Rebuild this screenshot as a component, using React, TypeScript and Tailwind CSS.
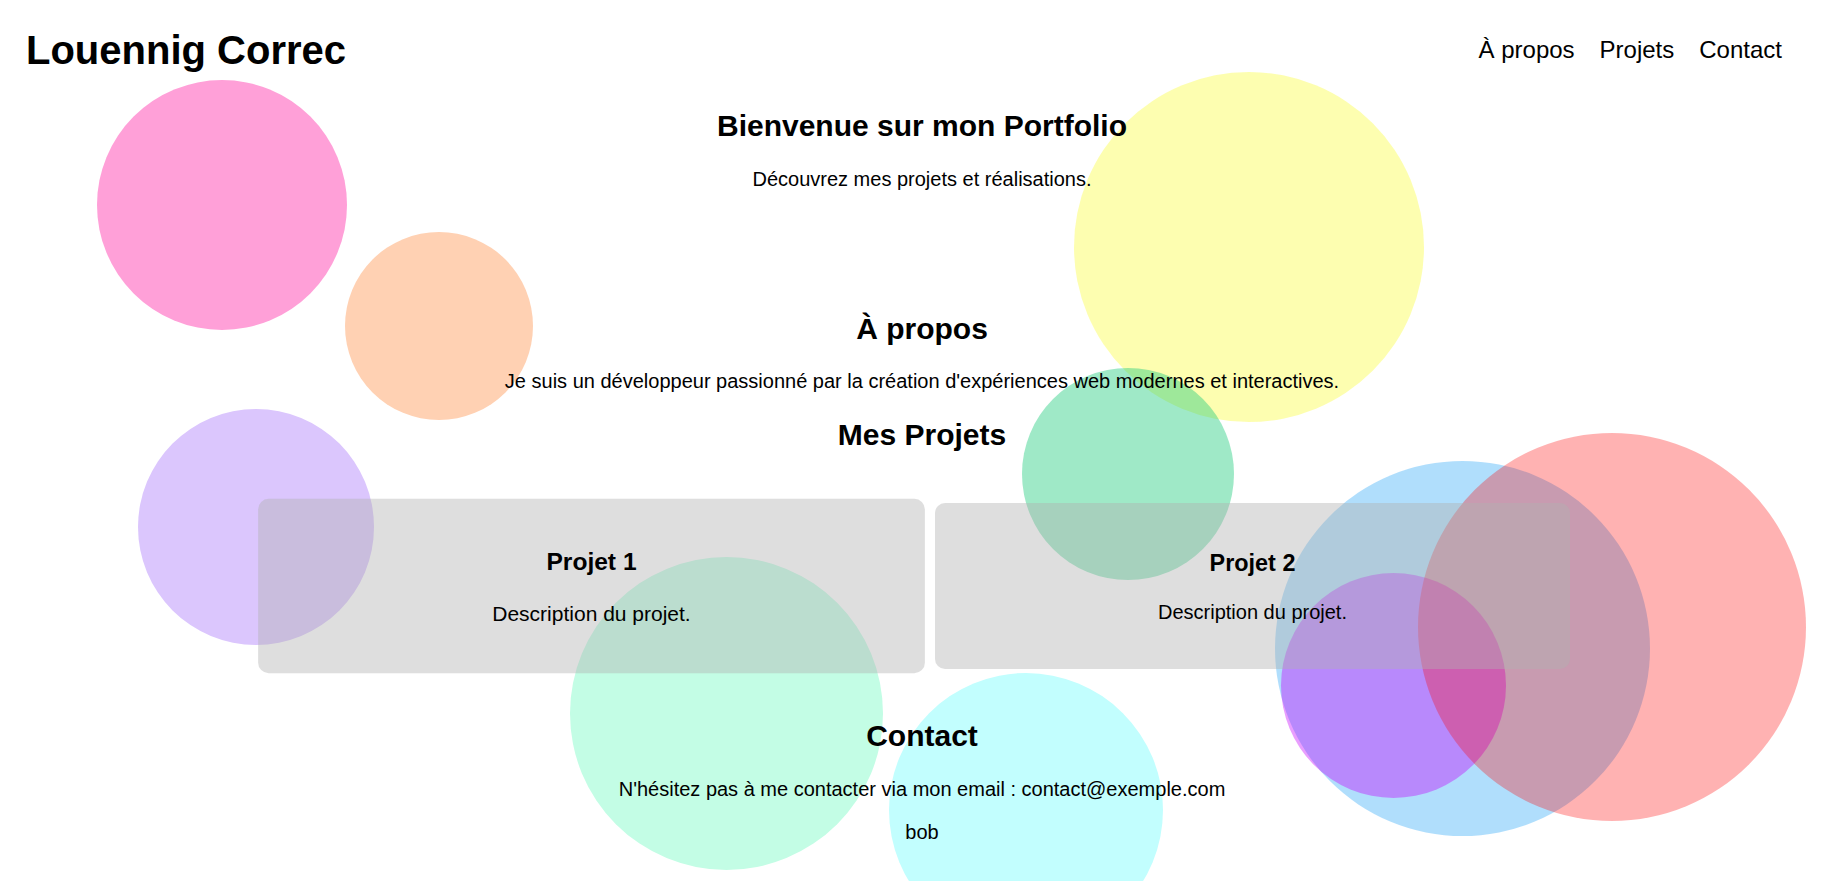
import React from "react";

type Circle = { left: number; top: number; d: number; color: string };

const circles: Circle[] = [
  { left: 96.5, top: 80.3, d: 250, color: "rgb(255,160,216)" },
  { left: 344.8, top: 231.5, d: 188, color: "rgb(255,209,179)" },
  { left: 1074, top: 72, d: 350, color: "rgba(248,252,0,0.31)" },
  { left: 1021.6, top: 367.5, d: 212, color: "rgba(32,204,125,0.43)" },
  { left: 138, top: 409, d: 236, color: "rgb(219,198,253)" },
  { left: 569.5, top: 556.5, d: 313, color: "rgb(195,253,229)" },
  { left: 889, top: 673, d: 274, color: "rgb(194,254,254)" },
  { left: 1275, top: 461, d: 375, color: "rgba(0,148,245,0.31)" },
  { left: 1281, top: 573, d: 225, color: "rgba(197,0,252,0.38)" },
  { left: 1418, top: 433, d: 388, color: "rgba(255,0,0,0.3)" },
];

function Card({ title, scaled }: { title: string; scaled?: boolean }) {
  return (
    <div
      className={
        "flex flex-col items-center rounded-[10px] bg-[rgba(176,176,176,0.42)] pt-[47px] pb-[45px] " +
        (scaled ? "scale-105" : "")
      }
    >
      <h3 className="text-[23.4px] font-bold leading-[27px]">{title}</h3>
      <p className="mt-[24px] text-[20px] leading-[23px]">Description du projet.</p>
    </div>
  );
}

export default function App() {
  return (
    <div
      className="relative min-h-screen overflow-hidden bg-white text-black"
      style={{ fontFamily: '"Liberation Sans", Arial, sans-serif' }}
    >
      <div className="pointer-events-none absolute inset-0 z-0">
        {circles.map((c, i) => (
          <div
            key={i}
            className="absolute rounded-full"
            style={{ left: c.left, top: c.top, width: c.d, height: c.d, background: c.color }}
          />
        ))}
      </div>

      <div className="relative z-10">
        <header className="flex h-[100px] items-center justify-between pl-[26px] pr-[55px]">
          <h1 className="text-[40px] font-bold leading-[46px]">Louennig Correc</h1>
          <nav className="flex gap-[25px] text-[24px] leading-[28px]">
            <a>À propos</a>
            <a>Projets</a>
            <a>Contact</a>
          </nav>
        </header>

        <main className="pl-[7px] text-center">
          <section className="pt-[9px]">
            <h2 className="text-[30px] font-bold leading-[34px]">Bienvenue sur mon Portfolio</h2>
            <p className="mt-[25px] text-[20px] leading-[23px]">Découvrez mes projets et réalisations.</p>
          </section>

          <section className="mt-[121px]">
            <h2 className="text-[30px] font-bold leading-[34px]">À propos</h2>
            <p className="mt-[24px] text-[20px] leading-[23px]">
              Je suis un développeur passionné par la création d'expériences web modernes et interactives.
            </p>
          </section>

          <section className="mt-[25px]">
            <h2 className="text-[30px] font-bold leading-[34px]">Mes Projets</h2>
            <div className="mx-auto mt-[51px] grid w-[1296px] grid-cols-2 gap-[26px]">
              <Card title="Projet 1" scaled />
              <Card title="Projet 2" />
            </div>
          </section>

          <section className="mt-[50px] pb-[40px]">
            <h2 className="text-[30px] font-bold leading-[34px]">Contact</h2>
            <p className="mt-[25px] text-[20px] leading-[23px]">
              N'hésitez pas à me contacter via mon email : contact@exemple.com
            </p>
            <p className="mt-[20px] text-[20px] leading-[23px]">bob</p>
          </section>
        </main>
      </div>
    </div>
  );
}
